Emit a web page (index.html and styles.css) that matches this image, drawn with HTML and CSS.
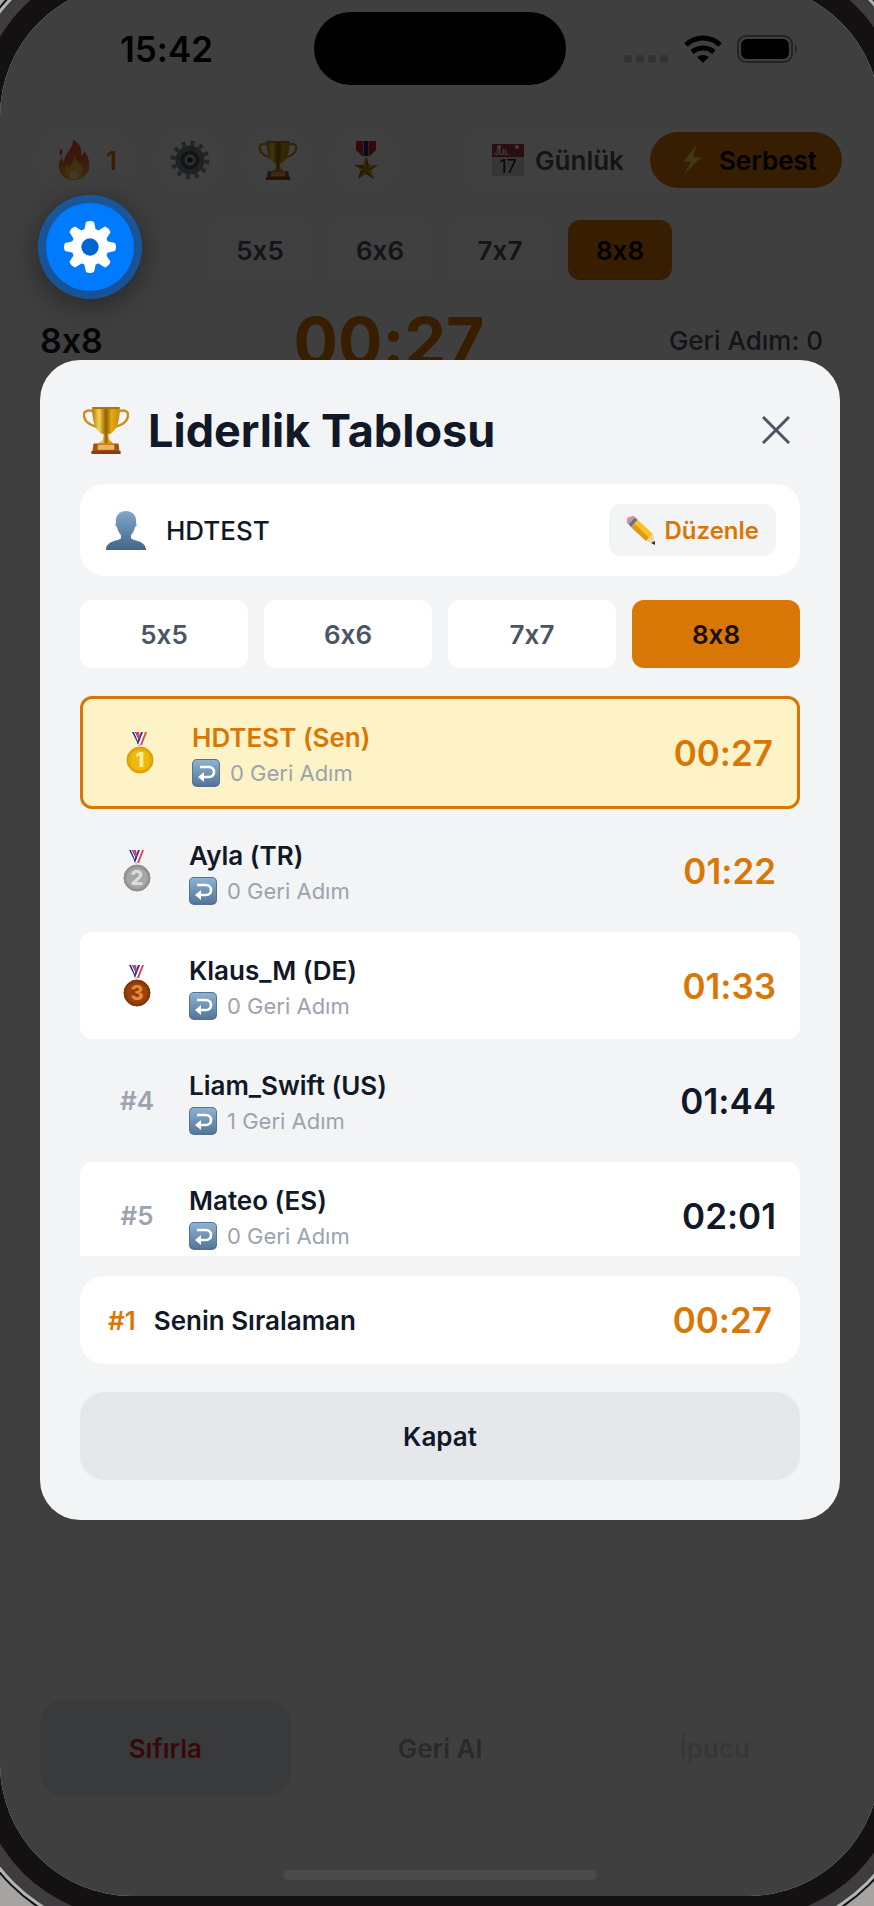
FILE: index.html
```html
<!DOCTYPE html>
<html lang="tr">
<head>
    <meta charset="UTF-8">
    <meta name="viewport" content="width=device-width, initial-scale=1.0">
    <title>Liderlik Tablosu</title>
    <link rel="stylesheet" href="styles.css">
</head>
<body>
    <!-- shared icons -->
    <svg class="sprite" aria-hidden="true">
        <defs>
            <linearGradient id="gold" x1="0" x2="1" y1="0" y2="0">
                <stop offset="0" stop-color="#b87a08"/>
                <stop offset=".25" stop-color="#f8d44a"/>
                <stop offset=".5" stop-color="#8f5d06"/>
                <stop offset=".7" stop-color="#e3a812"/>
                <stop offset="1" stop-color="#c98c0c"/>
            </linearGradient>
            <linearGradient id="flame" x1="0" x2="0" y1="0" y2="1">
                <stop offset="0" stop-color="#e8432c"/>
                <stop offset=".55" stop-color="#f26a2a"/>
                <stop offset="1" stop-color="#fbb034"/>
            </linearGradient>
            <linearGradient id="steel" x1="0" x2="0" y1="0" y2="1">
                <stop offset="0" stop-color="#7fa8cb"/>
                <stop offset="1" stop-color="#44658a"/>
            </linearGradient>
            <linearGradient id="key" x1="0" x2="0" y1="0" y2="1">
                <stop offset="0" stop-color="#8fb3d1"/>
                <stop offset=".5" stop-color="#6f94b5"/>
                <stop offset="1" stop-color="#56799b"/>
            </linearGradient>
            <radialGradient id="m1"><stop offset="0" stop-color="#f3b90c"/><stop offset=".7" stop-color="#f0b90d"/><stop offset="1" stop-color="#d99d06"/></radialGradient>
            <radialGradient id="m2"><stop offset="0" stop-color="#a2a2a2"/><stop offset=".7" stop-color="#a8a8a8"/><stop offset="1" stop-color="#8a8a8a"/></radialGradient>
            <radialGradient id="m3"><stop offset="0" stop-color="#8f3a05"/><stop offset=".7" stop-color="#9b430a"/><stop offset="1" stop-color="#7d3103"/></radialGradient>
        </defs>

        <symbol id="i-trophy" viewBox="0 0 44 46">
            <path d="M10 5C3 3 0 6 1 10c1 6 6 8 12 10M34 5c7-2 10 1 9 5-1 6-6 8-12 10" fill="none" stroke="#c9901a" stroke-width="2.4"/>
            <path d="M9 1h26c1 12-3 24-10 26h-6C12 25 8 13 9 1z" fill="url(#gold)"/>
            <path d="M9 1h26v2H9z" fill="#a87310"/>
            <path d="M20 26h4l1 6 4 4H15l4-4z" fill="url(#gold)"/>
            <path d="M10 36h24l1 8H9z" fill="#a5501b"/>
            <path d="M14 37h16v5H14z" fill="#f0b45c"/>
            <path d="M8 43h28v3H8z" fill="#8a3d12"/>
        </symbol>

        <symbol id="i-fire" viewBox="0 0 32 40">
            <path d="M15 0c8 4 9 10 8 16 2-1 3-3 3-5 5 6 6 12 5 18-2 7-8 11-15 11S2 36 1 29c-1-5 1-9 3-12 0 2 1 4 2 5 0-9 9-12 9-22z" fill="url(#flame)"/>
            <path d="M4 9c-3 2-3 4-1 7 1-2 2-4 1-7z" fill="#e8432c"/>
            <path d="M17 16c1 6 8 8 8 15 0 5-4 8-9 8s-9-3-9-8c0-3 1-5 2-6 1 2 2 3 3 3 0-4 4-7 5-12z" fill="#fbc040"/>
            <ellipse cx="16" cy="35" rx="5" ry="4" fill="#fff0a0"/>
        </symbol>

        <symbol id="i-cog" viewBox="0 0 40 40">
            <circle cx="20" cy="20" r="17" fill="none" stroke="#8b9299" stroke-width="5" stroke-dasharray="4 4.9"/>
            <circle cx="20" cy="20" r="12" fill="#656c73" stroke="#7c838a" stroke-width="5"/>
            <circle cx="20" cy="20" r="8" fill="none" stroke="#41474d" stroke-width="2"/>
            <circle cx="20" cy="20" r="4" fill="#3c4247" stroke="#c3cad0" stroke-width="2"/>
        </symbol>

        <symbol id="i-star" viewBox="0 0 24 40">
            <path d="M2 1h20v9l-6 6H8l-6-6z" fill="#d3202f"/>
            <path d="M9 1h6v15H9z" fill="#8d9cc4"/>
            <path d="M10 1h4v15h-4z" fill="#1f2e78"/>
            <path d="M12 16l3 9h9l-7 5 3 9-8-5-8 5 3-9-7-5h9z" fill="#d0a720"/>
            <path d="M12 16v14l3-5zM24 25l-12 5 5 0zM20 39l-8-9v4zM4 39l8-9-5 0zM0 25l12 5-3-5z" fill="#8f6c0d"/>
        </symbol>

        <symbol id="i-bolt" viewBox="0 0 24 34">
            <path d="M17 1L2 19h9L3 33l19-19h-9z" fill="#fde047"/>
        </symbol>

        <symbol id="i-person" viewBox="0 0 40 40">
            <path d="M20 1c7 0 11 5 10 12 1 1 1 3-1 4-1 4-2 6-4 8v3c1 3 14 2 15 11v1H0v-1c1-9 14-8 15-11v-3c-2-2-3-4-4-8-2-1-2-3-1-4C9 6 13 1 20 1z" fill="url(#steel)"/>
        </symbol>

        <symbol id="i-pencil" viewBox="0 0 30 30">
            <path d="M1 6q-1-3 2-4t5-1l4 4-7 7-4-4z" fill="#e9899a"/>
            <path d="M8 2l4 3-7 7-3-4z" fill="#8fa5bd"/>
            <path d="M3 9l6-6 2 2-6 7z" fill="#5d7289"/>
            <path d="M12 5l15 14-7 7L5 12z" fill="#f7c325"/>
            <path d="M8 8l15 15-3 3L5 12z" fill="#dd9a12"/>
            <path d="M27 19l2 10-9-3z" fill="#f3d3a0"/>
            <path d="M29 26v4l-4-2z" fill="#333"/>
        </symbol>

        <symbol id="i-return" viewBox="0 0 28 28">
            <rect width="28" height="28" rx="5" fill="#56728e"/>
            <rect x="1" y="1" width="26" height="25" rx="4" fill="url(#key)"/>
            <path d="M8 8h9c3 0 5 2 5 5s-2 5-5 5h-6" fill="none" stroke="#fff" stroke-width="2.6"/>
            <path d="M12 13v10l-6-5z" fill="#fff"/>
        </symbol>

        <symbol id="i-ribbon" viewBox="0 0 28 14">
            <path d="M6 0h4l5 11-2 3z" fill="#2f3192"/>
            <path d="M8 0h1l5 11-1 1z" fill="#fff"/>
            <path d="M21 0h-5l-5 13h5z" fill="#fff"/>
            <path d="M21 0h-2l-5 13h2z" fill="#e0404e"/>
            <path d="M17 0h-2l-4 11 1 2z" fill="#2f3192"/>
            <path d="M10 0h3l1 5-1 2z" fill="#e0404e"/>
        </symbol>
    </svg>

    <div class="stage">
        <div class="screen">
            <div class="status-bar">
                <span class="clock">15:42</span>
                <span class="island"></span>
                <span class="status-icons">
                    <svg width="46" height="28" viewBox="0 0 46 28" fill="#000" opacity=".2">
                        <rect x="1" y="20" width="8" height="8" rx="3"/><rect x="13" y="20" width="8" height="8" rx="3"/>
                        <rect x="25" y="20" width="8" height="8" rx="3"/><rect x="37" y="20" width="8" height="8" rx="3"/>
                    </svg>
                    <svg width="38" height="28" viewBox="0 0 38 28">
                        <g fill="none" stroke="#000" stroke-width="5">
                            <path d="M2 10Q9 3 19 3t17 7"/>
                            <path d="M8 17q5-4 11-4t11 4"/>
                        </g>
                        <path d="M19 28l-6-6q6-4 12 0z"/>
                    </svg>
                    <svg width="62" height="28" viewBox="0 0 62 28">
                        <rect x="1" y="1" width="54" height="26" rx="8" fill="none" stroke="#000" stroke-opacity=".45" stroke-width="2"/>
                        <rect x="4" y="4" width="48" height="20" rx="6"/>
                        <path d="M58 9q4 5 0 10z" opacity=".45"/>
                    </svg>
                </span>
            </div>

            <div class="top-bar">
                <div class="tools">
                    <button class="pill streak"><svg width="32" height="40"><use href="#i-fire"/></svg>1</button>
                    <button class="pill round" aria-label="Ayarlar"><svg width="40" height="40"><use href="#i-cog"/></svg></button>
                    <button class="pill round" aria-label="Liderlik"><svg width="38" height="40"><use href="#i-trophy"/></svg></button>
                    <button class="pill round" aria-label="Başarılar"><svg width="24" height="40"><use href="#i-star"/></svg></button>
                </div>
                <div class="modes">
                    <button class="mode">
                        <svg width="32" height="32" viewBox="0 0 32 32">
                            <rect width="32" height="32" fill="#d8d8d8"/>
                            <rect width="32" height="13" fill="#a83a44"/>
                            <circle cx="7" cy="3" r="2" fill="#fff"/><circle cx="25" cy="3" r="2" fill="#fff"/>
                            <text x="2" y="11" class="cal-month">JUL</text>
                            <text x="16" y="29" text-anchor="middle" class="cal-day">17</text>
                        </svg>
                        Günlük
                    </button>
                    <button class="mode active"><svg width="22" height="32"><use href="#i-bolt"/></svg>Serbest</button>
                </div>
            </div>

            <div class="sizes">
                <button class="size">5x5</button>
                <button class="size">6x6</button>
                <button class="size">7x7</button>
                <button class="size active">8x8</button>
            </div>

            <div class="game-info">
                <span class="board">8x8</span>
                <span class="timer">00:27</span>
                <span class="undo-count">Geri Adım: 0</span>
            </div>

            <div class="actions">
                <button class="action reset">Sıfırla</button>
                <button class="action undo">Geri Al</button>
                <button class="action hint">İpucu</button>
            </div>
            <div class="home-indicator"></div>

            <div class="overlay">
                <div class="modal" role="dialog" aria-labelledby="modal-title">
                    <div class="modal-header">
                        <svg width="46" height="48"><use href="#i-trophy"/></svg>
                        <h1 id="modal-title">Liderlik Tablosu</h1>
                        <button class="close" aria-label="Kapat">
                            <svg width="28" height="28" viewBox="0 0 28 28"><path d="M1 1l26 26M27 1L1 27" stroke="#4b5563" stroke-width="3"/></svg>
                        </button>
                    </div>

                    <div class="profile">
                        <svg width="40" height="40"><use href="#i-person"/></svg>
                        <span class="profile-name">HDTEST</span>
                        <button class="edit"><svg width="30" height="30"><use href="#i-pencil"/></svg>Düzenle</button>
                    </div>

                    <div class="tabs">
                        <button class="tab">5x5</button>
                        <button class="tab">6x6</button>
                        <button class="tab">7x7</button>
                        <button class="tab active">8x8</button>
                    </div>

                    <ol class="scores">
                        <li class="score me">
                            <span class="rank">
                                <svg width="28" height="42" viewBox="0 0 28 42">
                                    <use href="#i-ribbon" width="28" height="14"/>
                                    <circle cx="14" cy="28" r="13" fill="url(#m1)" stroke="#d79b08"/>
                                    <text x="14" y="35" text-anchor="middle" class="medal-num gold">1</text>
                                </svg>
                            </span>
                            <div class="player">
                                <div class="name">HDTEST (Sen)</div>
                                <div class="steps"><svg width="28" height="28"><use href="#i-return"/></svg>0 Geri Adım</div>
                            </div>
                            <span class="time top">00:27</span>
                        </li>
                        <li class="score">
                            <span class="rank">
                                <svg width="28" height="42" viewBox="0 0 28 42">
                                    <use href="#i-ribbon" width="28" height="14"/>
                                    <circle cx="14" cy="28" r="13" fill="url(#m2)" stroke="#8b8b8b"/>
                                    <text x="14" y="35" text-anchor="middle" class="medal-num silver">2</text>
                                </svg>
                            </span>
                            <div class="player">
                                <div class="name">Ayla (TR)</div>
                                <div class="steps"><svg width="28" height="28"><use href="#i-return"/></svg>0 Geri Adım</div>
                            </div>
                            <span class="time top">01:22</span>
                        </li>
                        <li class="score">
                            <span class="rank">
                                <svg width="28" height="42" viewBox="0 0 28 42">
                                    <use href="#i-ribbon" width="28" height="14"/>
                                    <circle cx="14" cy="28" r="13" fill="url(#m3)" stroke="#803405"/>
                                    <text x="14" y="35" text-anchor="middle" class="medal-num bronze">3</text>
                                </svg>
                            </span>
                            <div class="player">
                                <div class="name">Klaus_M (DE)</div>
                                <div class="steps"><svg width="28" height="28"><use href="#i-return"/></svg>0 Geri Adım</div>
                            </div>
                            <span class="time top">01:33</span>
                        </li>
                        <li class="score">
                            <span class="rank">#4</span>
                            <div class="player">
                                <div class="name">Liam_Swift (US)</div>
                                <div class="steps"><svg width="28" height="28"><use href="#i-return"/></svg>1 Geri Adım</div>
                            </div>
                            <span class="time">01:44</span>
                        </li>
                        <li class="score">
                            <span class="rank">#5</span>
                            <div class="player">
                                <div class="name">Mateo (ES)</div>
                                <div class="steps"><svg width="28" height="28"><use href="#i-return"/></svg>0 Geri Adım</div>
                            </div>
                            <span class="time">02:01</span>
                        </li>
                    </ol>

                    <div class="my-rank">
                        <span class="my-place">#1</span>
                        <span class="my-label">Senin Sıralaman</span>
                        <span class="time top">00:27</span>
                    </div>

                    <button class="dismiss">Kapat</button>
                </div>
            </div>
        </div>

        <button class="fab" aria-label="Geliştirici menüsü">
            <svg width="52" height="52" viewBox="-26 -26 52 52" fill="#fff">
                <g id="tooth">
                    <path d="M-4-25q4-2 8 0l2 9H-6z"/>
                    <path d="M-4 25q4 2 8 0l2-9H-6z"/>
                </g>
                <use href="#tooth" transform="rotate(45)"/>
                <use href="#tooth" transform="rotate(90)"/>
                <use href="#tooth" transform="rotate(135)"/>
                <circle r="13.5" fill="none" stroke="#fff" stroke-width="10"/>
                <circle r="8.5" fill="#0066d4"/>
            </svg>
        </button>
    </div>
</body>
</html>
```
FILE: styles.css
```css
* {
    box-sizing: border-box;
}

body {
    margin: 0;
    font-family: Inter, "Liberation Sans", sans-serif;
    font-size: 26px;
    /* keeps 5x5 as a plain x */
    font-variant-ligatures: no-contextual;
    color: #111827;
    background: #a5a4a1;
}

button {
    font: inherit;
    font-variant-ligatures: no-contextual;
    font-weight: 600;
    color: inherit;
    border: none;
    background: none;
    padding: 0;
    cursor: pointer;
}

svg {
    display: block;
    flex: none;
}

.sprite {
    position: absolute;
    width: 0;
    height: 0;
}

/* phone */
.stage {
    position: relative;
    display: flex;
    flex-direction: column;
    min-height: 100vh;
    padding-bottom: 10px;
    overflow: hidden;
}

.screen {
    position: relative;
    flex: 1;
    display: flex;
    flex-direction: column;
    margin: -16px -6px 0 0;
    padding: 28px 40px 16px;
    background: #fcfcfc;
    border-radius: 132px;
    /* bezel, frame and the thin bright edge */
    box-shadow: 0 0 0 22px #131112, 0 0 0 35px #3e3c3e, 0 0 0 38px #b4b4b4, 0 0 0 40px #111;
}

.status-bar {
    display: grid;
    grid-template-columns: 1fr 252px 1fr;
    align-items: center;
}

.clock {
    font-size: 35px;
    font-weight: 600;
    color: #000;
    padding-left: 80px;
}

.island {
    height: 73px;
    border-radius: 37px;
    background: #000;
}

.status-icons {
    display: flex;
    gap: 15px;
    padding-left: 57px;
}

.top-bar {
    display: flex;
    justify-content: space-between;
    margin: 41px -5px 0 -4px;
}

.tools {
    display: flex;
    gap: 20px;
}

.pill {
    display: flex;
    align-items: center;
    justify-content: center;
    height: 68px;
    border-radius: 34px;
    background: #fff;
}

.round {
    width: 68px;
}

.streak {
    width: 100px;
    gap: 16px;
    padding-left: 3px;
    color: #d97706;
}

.modes {
    display: flex;
    align-items: center;
    padding: 0 3px;
    border-radius: 34px;
    background: #fff;
}

.mode {
    display: flex;
    align-items: center;
    gap: 11px;
    height: 56px;
    padding: 0 26px;
    border-radius: 28px;
    color: #4b5563;
}

.mode.active {
    gap: 16px;
    color: #000;
    background: #d97706;
    padding: 0 25px 0 31px;
}

.cal-month {
    font-size: 8px;
    fill: #fff;
}

.cal-day {
    font-size: 18px;
    font-weight: 400;
    fill: #222;
}

.sizes {
    display: flex;
    justify-content: center;
    gap: 16px;
    margin-top: 26px;
}

.size {
    width: 104px;
    height: 60px;
    border-radius: 12px;
    background: #fff;
    color: #4b5563;
}

.size.active {
    background: #d97706;
    color: #000;
}

.game-info {
    display: grid;
    grid-template-columns: 1fr auto 1fr;
    align-items: center;
    margin-top: 19px;
    line-height: 84px;
}

.board {
    font-size: 34px;
    font-weight: 600;
}

.timer {
    font-size: 66px;
    font-weight: 700;
    color: #d97706;
    margin-right: 102px;
}

.undo-count {
    font-weight: 500;
    color: #4b5563;
    text-align: right;
    padding-right: 17px;
}

.actions {
    display: grid;
    grid-template-columns: repeat(3, 1fr);
    gap: 24px;
    margin-top: auto;
}

.action {
    height: 96px;
    border-radius: 24px;
}

.reset {
    background: #e2e8f0;
    color: #dc2626;
}

.undo {
    color: #4b5563;
    opacity: 0.5;
}

.hint {
    color: #4b5563;
    opacity: 0.2;
}

.home-indicator {
    position: relative;
    z-index: 2;
    width: 314px;
    height: 10px;
    margin: 74px auto 0;
    border-radius: 5px;
    background: #4a4a4a;
}

/* leaderboard modal */
.overlay {
    position: absolute;
    inset: 0;
    z-index: 1;
    display: flex;
    align-items: center;
    padding: 0 40px;
    border-radius: 132px;
    background: rgba(0, 0, 0, 0.75);
}

.modal {
    width: 100%;
    padding: 40px;
    border-radius: 40px;
    background: #f3f4f6;
}

.modal-header {
    display: flex;
    align-items: center;
    gap: 19px;
    height: 60px;
    padding-left: 3px;
    margin-bottom: 24px;
}

.modal-header h1 {
    flex: 1;
    margin: 0;
    font-size: 45px;
    font-weight: 700;
}

.close {
    padding: 10px;
}

.profile {
    display: flex;
    align-items: center;
    gap: 20px;
    height: 92px;
    padding: 0 24px 0 26px;
    border-radius: 24px;
    background: #fff;
    margin-bottom: 24px;
}

.profile-name {
    flex: 1;
    font-weight: 500;
}

.edit {
    display: flex;
    align-items: center;
    gap: 8px;
    height: 52px;
    padding: 0 17px;
    border-radius: 12px;
    background: #f3f4f6;
    color: #d97706;
    font-size: 24px;
}

.tabs {
    display: grid;
    grid-template-columns: repeat(4, 1fr);
    gap: 16px;
    margin-bottom: 28px;
}

.tab {
    height: 68px;
    border-radius: 12px;
    background: #fff;
    color: #4b5563;
}

.tab.active {
    background: #d97706;
    color: #111;
}

.scores {
    display: flex;
    flex-direction: column;
    gap: 8px;
    height: 560px;
    margin: 0 0 20px;
    padding: 0;
    list-style: none;
    overflow: hidden;
}

.score {
    display: flex;
    flex: none;
    align-items: center;
    gap: 19px;
    padding: 18px 24px;
    border-radius: 12px;
}

.score:nth-child(odd) {
    background: #fff;
}

.score.me {
    background: #fef3c7;
    border: 3px solid #d97706;
}

.rank {
    display: flex;
    justify-content: center;
    width: 66px;
    font-weight: 600;
    color: #9ca3af;
}

.medal-num {
    font-size: 20px;
    font-weight: 800;
}

.gold {
    fill: #fff0a0;
}

.silver {
    fill: #dcdcdc;
}

.bronze {
    fill: #e58a3a;
}

.player {
    flex: 1;
}

.name {
    font-weight: 600;
    line-height: 41px;
}

.me .name {
    color: #d97706;
}

.steps {
    display: flex;
    align-items: center;
    gap: 10px;
    font-size: 22px;
    line-height: 30px;
    color: #9ca3af;
}

.time {
    font-size: 35px;
    font-weight: 600;
}

.time.top {
    color: #d97706;
}

.my-rank {
    display: flex;
    align-items: center;
    gap: 18px;
    height: 88px;
    padding: 0 28px;
    border-radius: 24px;
    background: #fff;
    margin-bottom: 28px;
    font-weight: 600;
}

.my-place {
    color: #d97706;
}

.my-label {
    flex: 1;
}

.dismiss {
    display: block;
    width: 100%;
    height: 88px;
    border-radius: 24px;
    background: #e5e7eb;
}

/* floating button over everything */
.fab {
    position: absolute;
    z-index: 3;
    left: 46px;
    top: 203px;
    display: flex;
    align-items: center;
    justify-content: center;
    width: 88px;
    height: 88px;
    border-radius: 50%;
    background: #007aff;
    box-shadow: 0 0 0 8px rgba(0, 122, 255, 0.5), 0 6px 30px 8px rgba(0, 0, 0, 0.4);
}
```
